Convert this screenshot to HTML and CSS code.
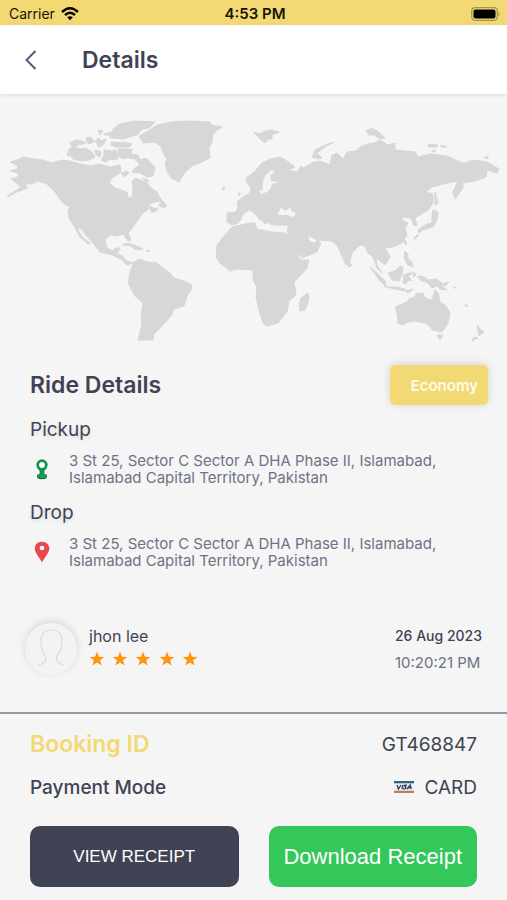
FILE: index.html
```html
<!DOCTYPE html>
<html lang="en">
<head>
<meta charset="utf-8">
<meta name="viewport" content="width=device-width, initial-scale=1">
<title>Details</title>
<link rel="stylesheet" href="styles.css">
</head>
<body>
<div class="status">
  <div class="carrier"><span>Carrier</span>
    <svg width="18" height="14" viewBox="0 0 18 14" aria-hidden="true"><path d="M1 5Q9-2.500 17 5M4 8Q9 3.500 14 8" fill="none" stroke="#050500" stroke-width="2.400"/><path d="M6.200 10.300Q9 8 11.800 10.300L9 13.300z" fill="#050500"/></svg>
  </div>
  <strong class="clock">4:53 PM</strong>
  <svg class="battery" width="30" height="14" viewBox="0 0 30 14" aria-hidden="true"><rect x=".7" y=".7" width="25.600" height="12.600" rx="3.500" fill="none" stroke="#a3924f" stroke-width="1.200"/><rect x="2.500" y="2.500" width="22" height="9" rx="2" fill="#000"/><path d="M27.500 4.700q2.400 2.300 0 4.600z" fill="#a3924f"/></svg>
</div>
<header class="topbar">
  <button class="back" type="button" aria-label="Back"><svg width="12" height="20" viewBox="0 0 12 20" aria-hidden="true"><path d="M10.500 1L1.500 10l9 9" fill="none" stroke="#55597a" stroke-width="2"/></svg></button>
  <h1>Details</h1>
</header>
<main>
  <svg class="map" viewBox="0 110 507 240" role="img" aria-label="World map">
    <g class="land">
      <path d="M10 162L17 160 23 157 33 159 43 160 52 163 62 160 70 161 80 164 90 166 100 164 110 167 120 165 121 170 120 173 112 178 109 183 115 188 127 192 128 197 132 198 133 187 132 182 135 178 141 180 147 183 151 188 157 192 160 198 167 206 164 208 159 206 157 210 152 213 150 208 143 213 138 220 133 227 128 233 131 240 128 241 123 234 117 236 110 235 105 240 107 248 113 251 115 248 120 248 117 254 123 256 125 260 133 263 127 265 122 260 112 255 100 252 93 243 85 234 82 229 77 228 82 237 90 243 88 244 80 237 74 226 69 218 68 211 70 206 66 205 62 202 55 192 47 184 38 181 32 184 25 184 28 188 17 192 7 197 10 194 17 190 21 187 15 182 11 179 18 177 18 173 10 171 17 169 18 166z"/>
      <path d="M67 155l3-7 5-1 5 2 6-1 6 4 3 5-6 3-8 1-8-2-2-3zM70 143l6-3 6 1 4 2-8 2-5 3zM86 138l5-1 3 5-6 2zM95 141l4-3 2 3 5-2-2 5-5 3-3-4zM98 130l5 1-3 4zM104 134l8-2 1-3 7-5 15-3 20 1-6 6-6 1-6 6-4 1-10 3-12-1-2-3-5 0zM111 142l16 1 5 1-3 3-13 0-5-2zM104 150l8 1 4-1 2 6-1 4-7-1-4 3-5-2 3-4zM95 150l6 2-1 5-4-2zM118 149l14 0-1 6-6 4-6-2zM130 154l8 1 2 5 6-2 7 7 2 3-2 8-6 1-7-4-8-1 3-4 5-3-5-6-6-1zM121 173l6-2 2 2-5 4zM143 178l6 3-3 1z"/>
      <path d="M139 136L148 131 157 125 171 122 191 121 210 122 212 125 222 127 217 130 213 134 212 142 209 148 210 158 202 162 192 166 185 172 179 182 171 178 167 171 165 164 167 159 163 153 161 146 154 142 143 143z"/>
      <path d="M122 245l5-2 7 2 9 4-7 1-5-4zM147 250l3 1-3 1zM133 263L139 259 147 262 157 263 163 268 170 273 174 278 184 281 192 285 191 290 187 296 184 306 174 309 171 316 161 327 154 334 153 340 138 340 142 324 141 317 143 303 135 296 128 283 130 273z"/>
      <path d="M227 213L236 212 238 207 237 202 243 197 250 193 251 188 247 183 246 178 253 173 262 163 270 159 280 157 290 163 295 167 288 170 297 172 301 166 303 168 312 163 320 161 330 165 332 155 337 153 343 159 347 152 356 151 360 147 368 144 374 143 380 140 388 145 395 143 395 150 405 151 415 152 418 157 430 154 447 156 460 162 466 163 473 160 487 162 499 169 497 173 487 170 486 177 475 181 463 183 463 188 455 199 453 192 458 181 447 183 432 187 426 192 433 194 433 203 428 210 420 215 415 218 417 225 414 226 411 218 403 217 402 220 408 223 405 228 407 235 402 243 393 247 385 248 390 257 385 265 379 260 376 258 377 265 382 273 377 268 373 257 368 253 365 246 360 245 352 253 350 262 346 265 337 245 332 241 317 240 307 235 310 242 315 243 317 240 321 243 317 252 302 258 297 252 287 237 288 225 272 225 267 222 265 224 262 220 258 213 257 210 263 217 261 221 254 213 250 210 244 213 241 219 238 223 232 225 227 222z"/>
      <path d="M232 227L250 223 255 223 257 229 272 232 285 233 297 253 300 260 309 260 307 268 300 276 294 282 296 295 289 301 287 312 278 323 267 326 263 323 259 310 256 297 257 287 253 280 253 270 237 269 230 271 220 263 216 257 217 245 223 237z"/>
      <path d="M308 293l1 6-4 11-5 1-1-7 2-6zM254 132l6 2 5-3 6-1 8 2-7 3 0 4-4 0-3 4-5-4zM349 262l3 3-2 2-2-1z"/>
      <path d="M223 187l2 1-1 2-2-1zM238 193l3 1-2 2zM366 131l6-3 5 3 4 3 4 4-5 1-6-4-5 0zM312 157l3-7 10-5 9-3-9 5-8 6 5 5-4 1zM428 145l9-1 0 3-8 0zM441 145l6 2-6 0zM432 150l4 1-3 1zM484 157l5 0-2 2zM435 192l3 11-3 2zM433 210l5 2-1 8-4 7-10 3-4 3-1-3 4-3 5-3 5-1 0-7zM418 234l0 2-4 4 1-3zM405 240l2 5-3-2zM405 251l3 3 0 5 4 3 1 5-5-2-4-7z"/>
      <path d="M370 267L377 273 386 282 385 287 395 287 405 289 404 291 386 287 380 281zM388 273l7-2 5-5 3 1-1 7-3 7-7-1zM403 275l6-2 4 0-5 3 4 5-4-1-2 4-3-1 1-4zM413 272l3 2-2 3zM405 291l8-2-5 4zM418 276l6 1 4 3 8-1 6 4 1 4 4 3-7-1-3-3-5 2-4-5-8-3zM443 284l6-2-4 4zM454 286l2 2-2 0z"/>
      <path d="M395 307L407 302 409 299 415 297 416 294 423 293 425 298 432 300 435 290 438 293 440 302 446 306 450 313 448 323 442 332 432 330 430 326 425 323 415 321 408 322 402 325 398 323 397 313zM437 335l6 0-3 5zM465 304l3 2-2 1zM477 325l3 4 4 3-5 4-1-5zM474 337l4 1-6 3z"/>
    </g>
    <g class="sea">
      <path d="M263 190l0-8 2-6 6-6 4 1-5 5 1 5 7 1-6 2-2 5-3 3-6 2-2-3zM278 213l3-5 5 3 4-4 1 3 5 4-3 3-6-2-8 0zM149 205l7-3 5 0-3 3 3 2-6 1zM134 164l3 1-1 2z"/>
    </g>
  </svg>
  <section class="ride">
    <div class="ride-head"><h2>Ride Details</h2><span class="tag">Economy</span></div>
    <h3>Pickup</h3>
    <div class="place">
      <svg width="24" height="24" viewBox="0 0 24 24" aria-hidden="true"><ellipse cx="12" cy="19.500" rx="5" ry="2.700" fill="#075f32"/><path d="M6.300 8a5.700 5.700 0 0 1 11.400 0q0 3-3.300 6v4q-2.400 3-4.800 0v-4Q6.300 11 6.300 8z" fill="#13924c"/><path d="M13 17.500h4v2q-5 4-10-.5v-2q2 2.500 6 .5z" fill="#15a653"/><circle cx="12" cy="8" r="2.900" fill="#fff"/></svg>
      <p>3 St 25, Sector C Sector A DHA Phase II, Islamabad, Islamabad Capital Territory, Pakistan</p>
    </div>
    <h3>Drop</h3>
    <div class="place">
      <svg width="24" height="24" viewBox="0 0 24 24" aria-hidden="true"><path d="M4.800 8.600C4.800 4.400 8 1.800 12 1.800s7.300 2.600 7.300 6.800C19.300 13 13.800 18.500 12 22.500 10.200 18.500 4.800 13 4.800 8.600z" fill="#e8494d"/><circle cx="12" cy="8" r="2.300" fill="#fff"/></svg>
      <p>3 St 25, Sector C Sector A DHA Phase II, Islamabad, Islamabad Capital Territory, Pakistan</p>
    </div>
  </section>
  <section class="driver">
    <div class="avatar"><svg width="52" height="52" viewBox="0 0 52 52" aria-hidden="true"><path d="M13 42q6-1 8-5 0-4-3-9-2-4-2-9 0-12 10-12 11 0 11 12 0 6-3 11-4 4-2 8 2 3 7 4" fill="none" stroke="#dadada" stroke-width="1.200"/></svg></div>
    <div class="who"><span class="name">jhon lee</span>
      <svg class="stars" width="110" height="16" viewBox="0 0 110 16" role="img" aria-label="5 stars"><defs><path id="star" d="M8 0.500l1.900 5.200 5.500.2-4.300 3.400 1.500 5.300L8 11.500l-4.600 3.100 1.500-5.300L.6 5.900l5.500-.2z" fill="#ff950a"/></defs><use href="#star"/><use href="#star" x="23"/><use href="#star" x="46"/><use href="#star" x="70"/><use href="#star" x="93"/></svg>
    </div>
    <div class="when"><span class="date">26 Aug 2023</span><span class="time">10:20:21 PM</span></div>
  </section>
  <section class="booking">
    <div class="row"><h2 class="gold">Booking ID</h2><span>GT468847</span></div>
    <div class="row"><h3>Payment Mode</h3><span class="card"><svg width="20" height="12" viewBox="0 0 20 12" aria-hidden="true"><path fill="#eef1f2" d="M0 0h20v12H0z"/><path fill="#35627d" d="M0 0h20v2.300H0z"/><path fill="#c77b52" d="M0 9.700h20V12H0z"/><path d="M3 4l1.500 4L7 4M9 4L8 8M13 4.200q-3-.5-2.500 1 2 .8 1 2.300-1 .6-2.500.2M13 8l3.200-4 1 4M14.500 6.700H17" fill="none" stroke="#23486b" stroke-width="1.400"/></svg>CARD</span></div>
    <div class="actions"><button class="view" type="button">VIEW RECEIPT</button><button class="download" type="button">Download Receipt</button></div>
  </section>
</main>
</body>
</html>
```
FILE: styles.css
```css
* { box-sizing: border-box; }
body { margin: 0; background: #f5f5f5; color: #3f4354; font-family: Inter, "Liberation Sans", sans-serif; }
h1, h2, h3, p { margin: 0; }
svg { display: block; flex: none; }
button { border: 0; padding: 0; }

.status { display: grid; grid-template-columns: 1fr auto 1fr; align-items: center; height: 25px; padding: 2px 6px 0 9px; background: #f3d974; color: #171406; font-size: 14px; }
.carrier { display: flex; align-items: center; gap: 6px; }
.clock { font-size: 15px; font-weight: 600; }
.battery { justify-self: end; }

.topbar { display: flex; align-items: center; height: 69px; padding: 0 25px; gap: 43px; background: #fff; box-shadow: 0 1px 4px #0000001c; }
.back { display: flex; background: none; width: 14px; height: 20px; }
h1 { font-size: 23px; line-height: 30px; font-weight: 600; }

.map { width: 100%; margin-top: 16px; }
.land { fill: #d7d7d7; stroke: #d7d7d7; stroke-width: 1; stroke-linejoin: round; }
.sea { fill: #f5f5f5; }

.ride { padding: 15px 30px 0; }
.ride-head { display: flex; align-items: center; justify-content: space-between; height: 40px; margin-right: -11px; }
h2 { font-size: 23px; line-height: 30px; font-weight: 600; }
.tag { display: flex; align-items: center; justify-content: flex-end; width: 98px; height: 40px; padding-right: 10px; border-radius: 5px; background: #f3d974; color: #fffbe9; font-size: 15px; font-weight: 600; box-shadow: 0 -1px 10px #00000024; }
.ride h3 { margin-top: 12px; font-size: 19px; line-height: 26px; font-weight: 400; text-shadow: 0 2px 4px #0000001c; }
.place { display: flex; align-items: center; gap: 15px; padding: 9px 0 2px; }
.place p { max-width: 380px; color: #6e7285; font-size: 15px; line-height: 17px; }

.driver { display: flex; align-items: center; margin-top: 38px; padding: 0 25px; height: 80px; }
.avatar { width: 52px; height: 52px; border-radius: 50%; background: #f3f3f3; box-shadow: 0 -2px 8px #00000020; }
.who { margin: 0 0 6px 12px; }
.name { display: block; padding-bottom: 5px; font-size: 16px; line-height: 20px; }
.when { display: grid; gap: 7px; margin-left: auto; font-size: 14px; line-height: 20px; }
.date { font-weight: 500; }
.time { color: #6e7285; font-size: 15px; }

.booking { margin-top: 23px; padding: 15px 30px; border-top: 2px solid #9799a8; }
.row { display: flex; align-items: center; justify-content: space-between; height: 30px; margin-bottom: 13px; font-size: 19px; }
.gold { color: #f3d974; }
.row h3 { font-size: 19px; font-weight: 500; }
.card { display: flex; align-items: center; gap: 10px; }
.actions { display: grid; grid-template-columns: 1fr 1fr; gap: 30px; margin-top: 24px; }
.actions button { height: 61px; border-radius: 10px; color: #fff; font-family: "Liberation Sans", sans-serif; }
.actions .view { background: #3f4354; font-size: 17px; }
.actions .download { background: #34c759; font-size: 22px; }
```
